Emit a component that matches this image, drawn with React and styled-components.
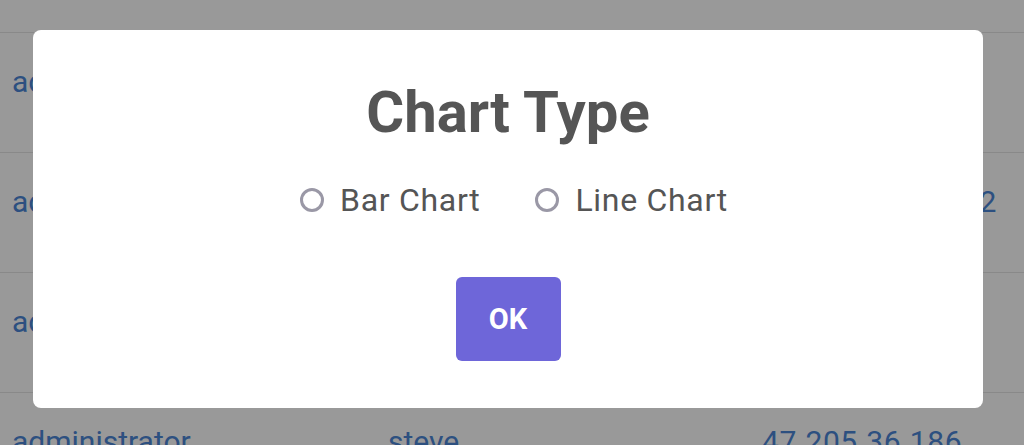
import React, { useState } from 'react'
import styled, { createGlobalStyle } from 'styled-components'

const GlobalStyle = createGlobalStyle`
  html, body {
    margin: 0;
    padding: 0;
    background: #ffffff;
    overflow: hidden;
  }
  body {
    font-family: Roboto, "Noto Sans", "Liberation Sans", sans-serif;
  }
`

const Page = styled.div`
  width: 1024px;
  height: 445px;
  overflow: hidden;
`

const Table = styled.div`
  display: flex;
  flex-direction: column;
`

const Row = styled.div`
  display: grid;
  grid-template-columns: 376px 374px 1fr;
  height: ${(p) => p.$h || 120}px;
  box-sizing: border-box;
  border-bottom: 1px solid #e4e4e4;
  padding: 32px 0 0 12px;
  font-size: 30px;
  line-height: 34px;
  color: #4b85d6;
  white-space: nowrap;
  overflow: hidden;
`

const Cell = styled.span`
  letter-spacing: ${(p) => (p.$num ? '0.6px' : '0')};
`

const Overlay = styled.div`
  position: fixed;
  inset: 0;
  background: rgba(0, 0, 0, 0.4);
  display: flex;
  align-items: flex-start;
  padding: 30px 0 0 33px;
`

const Modal = styled.div`
  width: 950px;
  height: 378px;
  box-sizing: border-box;
  background: #ffffff;
  border-radius: 8px;
  display: flex;
  flex-direction: column;
  align-items: center;
  padding-top: 50px;
`

const Title = styled.h2`
  margin: 0;
  font-size: 58px;
  line-height: 64px;
  font-weight: 700;
  color: #555555;
`

const Options = styled.div`
  display: flex;
  gap: 55px;
  margin-top: 36px;
  padding-left: 12px;
`

const Option = styled.label`
  display: flex;
  align-items: center;
  gap: 16px;
  font-size: 32px;
  line-height: 40px;
  letter-spacing: 0.7px;
  color: #555555;
  cursor: pointer;
`

const Radio = styled.span`
  width: 24px;
  height: 24px;
  box-sizing: border-box;
  border-radius: 50%;
  border: 3px solid ${(p) => (p.$on ? '#6f66d8' : '#9a98a6')};
  background: ${(p) => (p.$on ? 'radial-gradient(#6f66d8 40%, #fff 45%)' : '#fff')};
`

const OkButton = styled.button`
  margin-top: 57px;
  width: 105px;
  height: 84px;
  border: none;
  border-radius: 6px;
  background: #6e66d9;
  color: #ffffff;
  font-family: inherit;
  font-size: 29px;
  font-weight: 700;
  cursor: pointer;
`

const rows = [
  { h: 33, cells: [] },
  { cells: ['administrator', 'steve', '47.205.36.180'] },
  { cells: ['administrator', 'steve', '104.248.170.252'] },
  { cells: ['administrator', 'steve', '47.205.36.181'] },
  { cells: ['administrator', 'steve', '47.205.36.186'] },
]

export default function App() {
  const [type, setType] = useState(null)

  return (
    <Page>
      <GlobalStyle />
      <Table>
        {rows.map((r, i) => (
          <Row key={i} $h={r.h}>
            {r.cells.map((c, j) => (
              <Cell key={j} $num={j === 2}>{c}</Cell>
            ))}
          </Row>
        ))}
      </Table>
      <Overlay>
        <Modal>
          <Title>Chart Type</Title>
          <Options>
            <Option onClick={() => setType('bar')}>
              <Radio $on={type === 'bar'} />
              Bar Chart
            </Option>
            <Option onClick={() => setType('line')}>
              <Radio $on={type === 'line'} />
              Line Chart
            </Option>
          </Options>
          <OkButton>OK</OkButton>
        </Modal>
      </Overlay>
    </Page>
  )
}
